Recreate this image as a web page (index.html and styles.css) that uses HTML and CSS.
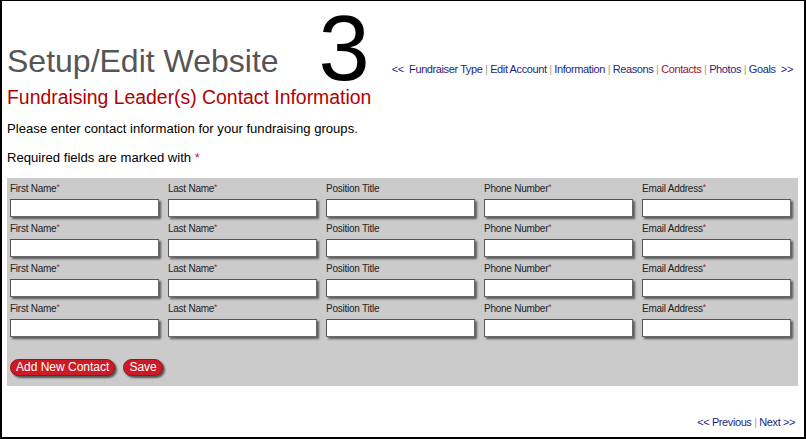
FILE: index.html
```html
<!DOCTYPE html>
<html>
<head>
<meta charset="utf-8">
<link rel="stylesheet" href="styles.css">
</head>
<body>
<div class="frame">
  <div class="header">
    <h1 class="title">Setup/Edit Website</h1>
    <div class="step">3</div>
    <nav class="steps">
      <a class="nav-link">&lt;&lt;</a>&nbsp;
      <a class="nav-link">Fundraiser Type</a> <span class="sep">|</span>
      <a class="nav-link">Edit Account</a> <span class="sep">|</span>
      <a class="nav-link">Information</a> <span class="sep">|</span>
      <a class="nav-link">Reasons</a> <span class="sep">|</span>
      <a class="nav-link current">Contacts</a> <span class="sep">|</span>
      <a class="nav-link">Photos</a> <span class="sep">|</span>
      <a class="nav-link">Goals</a>&nbsp;
      <a class="nav-link">&gt;&gt;</a>
    </nav>
  </div>
  <h2 class="subtitle">Fundraising Leader(s) Contact Information</h2>
  <p class="intro">Please enter contact information for your fundraising groups.</p>
  <p class="required-note">Required fields are marked with <span class="req">*</span></p>

  <form class="panel">
    <div class="grid">
      <div class="field"><label>First Name<span class="req">*</span></label><input type="text"></div>
      <div class="field"><label>Last Name<span class="req">*</span></label><input type="text"></div>
      <div class="field"><label>Position Title</label><input type="text"></div>
      <div class="field"><label>Phone Number<span class="req">*</span></label><input type="text"></div>
      <div class="field"><label>Email Address<span class="req">*</span></label><input type="text"></div>

      <div class="field"><label>First Name<span class="req">*</span></label><input type="text"></div>
      <div class="field"><label>Last Name<span class="req">*</span></label><input type="text"></div>
      <div class="field"><label>Position Title</label><input type="text"></div>
      <div class="field"><label>Phone Number<span class="req">*</span></label><input type="text"></div>
      <div class="field"><label>Email Address<span class="req">*</span></label><input type="text"></div>

      <div class="field"><label>First Name<span class="req">*</span></label><input type="text"></div>
      <div class="field"><label>Last Name<span class="req">*</span></label><input type="text"></div>
      <div class="field"><label>Position Title</label><input type="text"></div>
      <div class="field"><label>Phone Number<span class="req">*</span></label><input type="text"></div>
      <div class="field"><label>Email Address<span class="req">*</span></label><input type="text"></div>

      <div class="field"><label>First Name<span class="req">*</span></label><input type="text"></div>
      <div class="field"><label>Last Name<span class="req">*</span></label><input type="text"></div>
      <div class="field"><label>Position Title</label><input type="text"></div>
      <div class="field"><label>Phone Number<span class="req">*</span></label><input type="text"></div>
      <div class="field"><label>Email Address<span class="req">*</span></label><input type="text"></div>
    </div>
    <div class="actions">
      <button type="button" class="btn">Add New Contact</button>
      <button type="button" class="btn">Save</button>
    </div>
  </form>

  <div class="pager">
    <a class="nav-link">&lt;&lt; Previous</a> <span class="sep">|</span> <a class="nav-link">Next &gt;&gt;</a>
  </div>
</div>
</body>
</html>
```

FILE: styles.css
```css
html, body {
  margin: 0;
  padding: 0;
  background: #fff;
}

.frame {
  box-sizing: border-box;
  width: 806px;
  height: 439px;
  border: 2px solid #000;
  border-top-width: 1px;
  padding: 0 6px 0 5px;
  font-family: "Liberation Sans", Arial, sans-serif;
  color: #000;
}

.header {
  display: flex;
  align-items: flex-end;
  height: 76px;
}

.title {
  margin: 0;
  font-size: 32px;
  line-height: 32px;
  font-weight: normal;
  color: #555;
  white-space: nowrap;
}

.step {
  font-size: 92px;
  line-height: 70px;
  margin: 0 0 -6px 40px;
  color: #000;
}

.steps {
  margin: 0 0 2px 22px;
  font-size: 11px;
  line-height: 11px;
  letter-spacing: -0.4px;
  white-space: nowrap;
}

.nav-link {
  color: #1f1f80;
  text-decoration: none;
}

.nav-link.current {
  color: #a5111e;
}

.sep {
  color: #a8a27a;
}

.subtitle {
  margin: 11px 0 0 0;
  font-size: 19.4px;
  line-height: 19px;
  font-weight: normal;
  color: #b20000;
}

.intro {
  margin: 14px 0 0 0;
  font-size: 13.1px;
  line-height: 16px;
}

.required-note {
  margin: 13px 0 0 0;
  font-size: 13.1px;
  line-height: 16px;
}

.req {
  color: #c0212e;
}

.field label .req {
  font-size: 9px;
  line-height: 0;
  vertical-align: 2px;
}

.panel {
  margin: 12px 0 0 0;
  background: #cbcbcb;
  width: 791px;
  height: 208px;
  box-sizing: border-box;
  padding: 4px 0 0 3px;
}

.grid {
  display: grid;
  grid-template-columns: repeat(5, 150px);
  column-gap: 8px;
  row-gap: 5px;
}

.field {
  display: flex;
  flex-direction: column;
}

.field label {
  font-size: 10px;
  line-height: 14px;
  height: 14px;
  letter-spacing: -0.25px;
  color: #222;
  white-space: nowrap;
}

.field input {
  margin: 3px 0 0 0;
  box-sizing: border-box;
  width: 149px;
  height: 18px;
  padding: 0 3px;
  border: 1px solid #6a6a6a;
  border-top-color: #555;
  border-left-color: #555;
  background: #fff;
  box-shadow: 2px 2px 2px #5a5a5a;
  font: 11px "Liberation Sans", Arial, sans-serif;
  outline: none;
}

.actions {
  display: flex;
  gap: 8px;
  margin-top: 22px;
}

.btn {
  box-sizing: border-box;
  height: 17px;
  padding: 0 5px;
  border: 1px solid #9d0f18;
  border-radius: 9px;
  background: #cc1b26;
  color: #fff;
  font: 12px/15px "Liberation Sans", Arial, sans-serif;
  box-shadow: 2px 2px 2px #555;
  cursor: pointer;
}

.pager {
  margin-top: 30px;
  text-align: right;
  font-size: 11px;
  line-height: 13px;
  letter-spacing: -0.4px;
  padding-right: 3px;
}
```
